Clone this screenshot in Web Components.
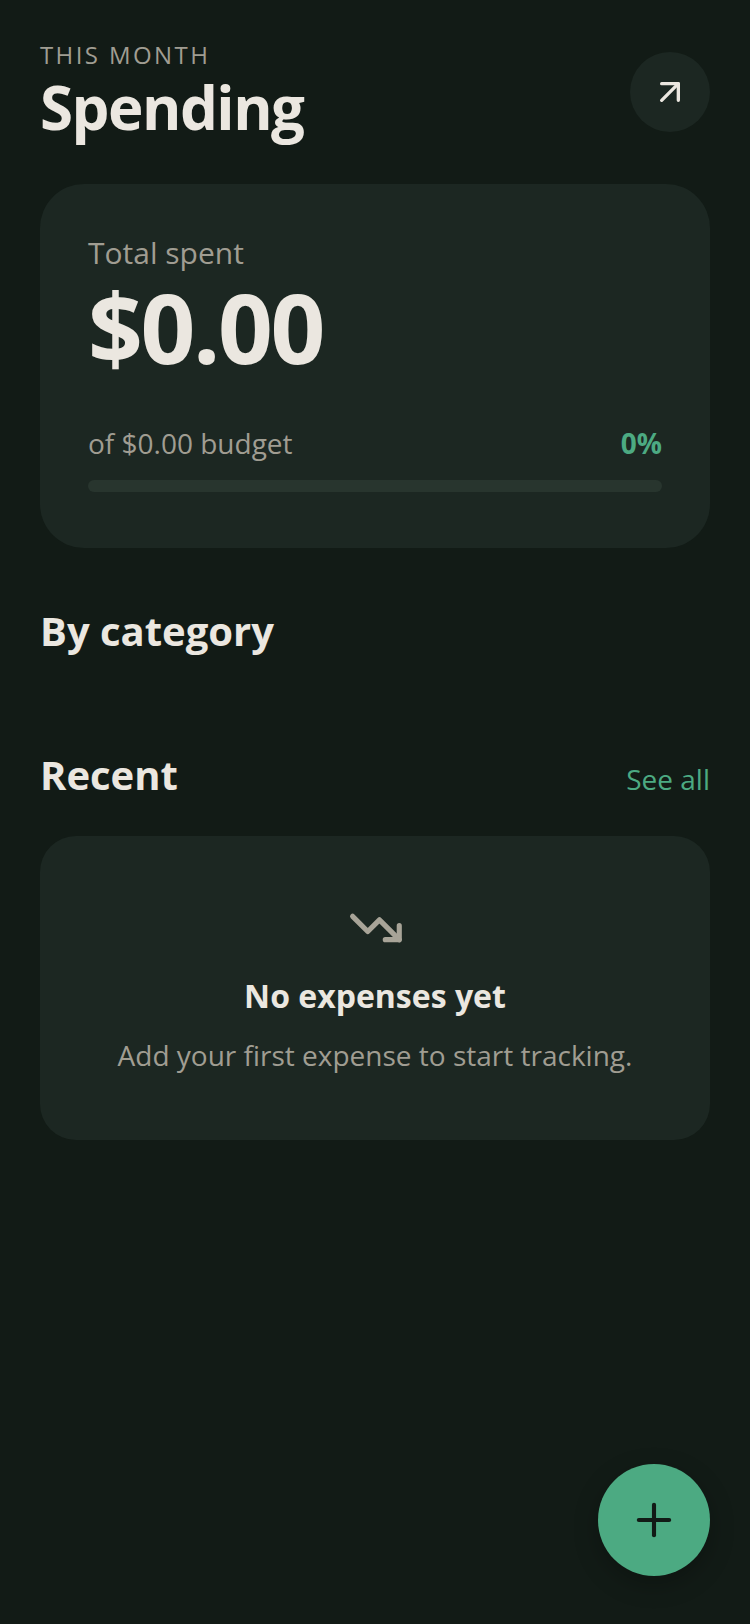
<!DOCTYPE html>
<html lang="en">
<head>
<meta charset="utf-8">
<title>Spending</title>
<style>
html,body{ margin:0; height:100%; background:#121b16; }
body{ font-family:"Open Sans",sans-serif; color:#ebe7e0; }
</style>
</head>
<body>
<spend-screen>
    <spend-header eyebrow="THIS MONTH" title="Spending"></spend-header>
    <spend-total amount="$0.00" budget="of $0.00 budget" percent="0%"></spend-total>
    <section-head label="By category" class="cat"></section-head>
    <section-head label="Recent" action="See all" class="rec"></section-head>
    <empty-card heading="No expenses yet" text="Add your first expense to start tracking."></empty-card>
</spend-screen>
<add-fab></add-fab>

<script>
class SpendScreen extends HTMLElement{
    constructor(){
        super();
        this.attachShadow( { mode:'open' } ).innerHTML = `
<style>
:host{ display:flex; flex-direction:column; padding:40px 40px 0; box-sizing:border-box; height:1624px; }
::slotted(.cat){ margin-top:55px; }
::slotted(.rec){ margin-top:88px; }
</style>
<slot></slot>`;
    }
}

class SpendHeader extends HTMLElement{
    constructor(){
        super();
        this.attachShadow( { mode:'open' } ).innerHTML = `
<style>
:host{ display:flex; justify-content:space-between; align-items:flex-start; height:144px; }
.eyebrow{ font-size:24px; line-height:30px; letter-spacing:2.4px; color:#a09d92; }
.title{ font-size:60px; line-height:74px; font-weight:700; letter-spacing:-1.5px; color:#ebe7e0; }
.btn{ width:80px; height:80px; margin-top:12px; border-radius:50%; background:#1c2722; display:flex; align-items:center; justify-content:center; }
</style>
<div>
    <div class="eyebrow">${this.getAttribute( 'eyebrow' )}</div>
    <div class="title">${this.getAttribute( 'title' )}</div>
</div>
<div class="btn">
    <svg width="40" height="40" viewBox="0 0 24 24" fill="none" stroke="#ebe7e0" stroke-width="2" stroke-linecap="round" stroke-linejoin="round"><path d="M7 17 17 7"/><path d="M7 7h10v10"/></svg>
</div>`;
    }
}

class SpendTotal extends HTMLElement{
    constructor(){
        super();
        this.attachShadow( { mode:'open' } ).innerHTML = `
<style>
:host{ display:block; background:#1c2722; border-radius:44px; padding:50px 48px 0; height:364px; box-sizing:border-box; }
.label{ font-size:30px; line-height:38px; color:#a09d92; }
.amount{ font-size:96px; line-height:100px; font-weight:700; letter-spacing:-2.4px; margin-top:5px; }
.row{ display:flex; justify-content:space-between; align-items:center; margin-top:47px; font-size:28px; line-height:38px; color:#a09d92; }
.pct{ font-weight:700; color:#4caa82; }
.track{ height:12px; border-radius:6px; background:#28352e; margin-top:18px; }
</style>
<div class="label">Total spent</div>
<div class="amount">${this.getAttribute( 'amount' )}</div>
<div class="row"><span>${this.getAttribute( 'budget' )}</span><span class="pct">${this.getAttribute( 'percent' )}</span></div>
<div class="track"></div>`;
    }
}

class SectionHead extends HTMLElement{
    constructor(){
        super();
        const action = this.getAttribute( 'action' );
        this.attachShadow( { mode:'open' } ).innerHTML = `
<style>
:host{ display:flex; justify-content:space-between; align-items:center; height:56px; }
.label{ font-size:40px; line-height:56px; font-weight:700; color:#ebe7e0; }
.action{ font-size:28px; line-height:38px; color:#4caa82; margin-top:8px; }
</style>
<div class="label">${this.getAttribute( 'label' )}</div>
${ action ? `<div class="action">${action}</div>` : '' }`;
    }
}

class EmptyCard extends HTMLElement{
    constructor(){
        super();
        this.attachShadow( { mode:'open' } ).innerHTML = `
<style>
:host{ display:flex; flex-direction:column; align-items:center; background:#1c2722; border-radius:36px; margin-top:33px; padding-top:64px; height:304px; box-sizing:border-box; }
svg{ display:block; }
.heading{ font-size:32px; line-height:44px; font-weight:700; margin-top:18px; color:#ebe7e0; }
.text{ font-size:28px; line-height:38px; color:#a09d92; margin-top:18px; }
</style>
<svg width="56" height="56" viewBox="0 0 24 24" fill="none" stroke="#a8a498" stroke-width="2.2" stroke-linecap="round" stroke-linejoin="round"><path d="M22.4 17 13.9 8.5l-5 5L2.4 7"/><path d="M16.4 17h6v-6"/></svg>
<div class="heading">${this.getAttribute( 'heading' )}</div>
<div class="text">${this.getAttribute( 'text' )}</div>`;
    }
}

class AddFab extends HTMLElement{
    constructor(){
        super();
        this.attachShadow( { mode:'open' } ).innerHTML = `
<style>
:host{ position:fixed; right:40px; bottom:48px; width:112px; height:112px; border-radius:50%; background:#4caa82; display:flex; align-items:center; justify-content:center; box-shadow:0 8px 24px rgba(0,0,0,.25); }
</style>
<svg width="52" height="52" viewBox="0 0 24 24" fill="none" stroke="#121b16" stroke-width="1.9" stroke-linecap="round"><path d="M5 12h14"/><path d="M12 5v14"/></svg>`;
    }
}

customElements.define( 'spend-screen', SpendScreen );
customElements.define( 'spend-header', SpendHeader );
customElements.define( 'spend-total', SpendTotal );
customElements.define( 'section-head', SectionHead );
customElements.define( 'empty-card', EmptyCard );
customElements.define( 'add-fab', AddFab );
</script>
</body>
</html>
